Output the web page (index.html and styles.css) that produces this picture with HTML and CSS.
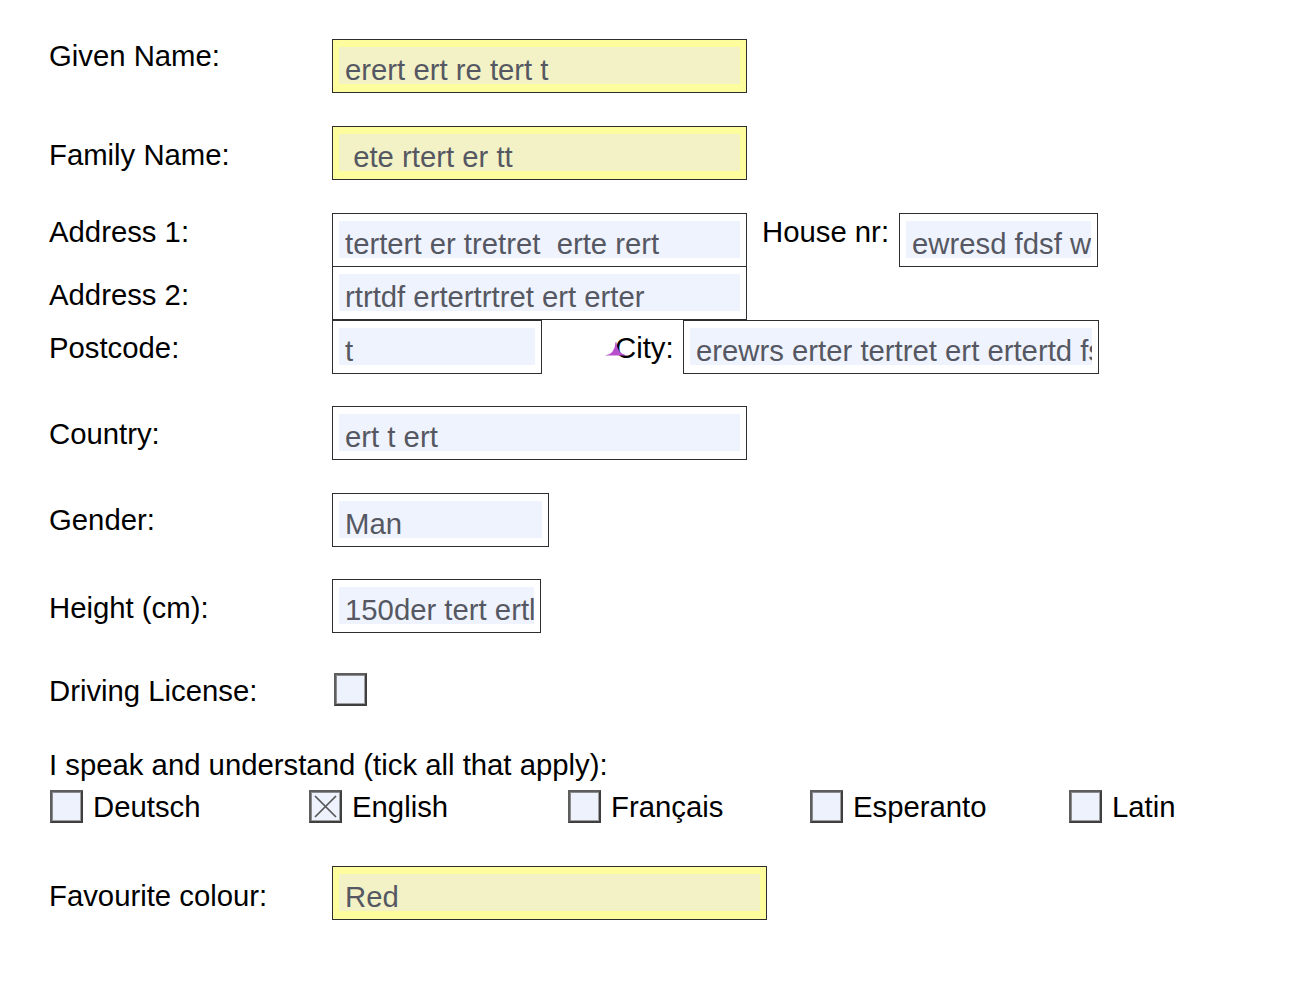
FILE: index.html
```html
<!DOCTYPE html>
<html lang="en">
<head>
<meta charset="utf-8">
<title>Form</title>
<link rel="stylesheet" href="styles.css">
</head>
<body>
<form class="form">
  <div class="row row-given">
    <div class="label label-flush">Given Name:</div>
    <div class="field field-yellow w-wide"><div class="value">erert ert re tert t</div></div>
  </div>

  <div class="row row-gap33">
    <div class="label">Family Name:</div>
    <div class="field field-yellow w-wide"><div class="value">&nbsp;ete rtert er tt</div></div>
  </div>

  <div class="row row-gap33">
    <div class="label label-near">Address 1:</div>
    <div class="field w-wide"><div class="value">tertert er tretret &nbsp;erte rert</div></div>
    <div class="label label-near label-house">House nr:</div>
    <div class="field w-house"><div class="value">ewresd fdsf w</div></div>
  </div>

  <div class="row row-overlap">
    <div class="label">Address 2:</div>
    <div class="field w-wide"><div class="value">rtrtdf ertertrtret ert erter</div></div>
  </div>

  <div class="row">
    <div class="label label-11">Postcode:</div>
    <div class="field w-post"><div class="value">t</div></div>
    <div class="label label-11 label-city">City:<svg class="caret" width="23" height="14" viewBox="0 0 23 14"><path d="M0 13.5 Q9.5 12.5 10.6 0 L11.4 0 Q12.5 12.5 23 13.5 Z" fill="#b84fcc"/></svg></div>
    <div class="field w-city"><div class="value">erewrs erter tertret ert ertertd fs</div></div>
  </div>

  <div class="row row-gap32">
    <div class="label label-11">Country:</div>
    <div class="field w-wide"><div class="value">ert t ert</div></div>
  </div>

  <div class="row row-gap33">
    <div class="label label-10">Gender:</div>
    <div class="field w-gender"><div class="value">Man</div></div>
  </div>

  <div class="row row-gap32">
    <div class="label">Height (cm):</div>
    <div class="field w-height"><div class="value">150der tert ertl</div></div>
  </div>

  <div class="row row-driving">
    <div class="label label-1">Driving License:</div>
    <div class="check check-driving"></div>
  </div>

  <div class="speak">I speak and understand (tick all that apply):</div>

  <div class="langs">
    <div class="lang"><span class="check"></span><span>Deutsch</span></div>
    <div class="lang"><span class="check check-on"><svg width="31" height="31" viewBox="0 0 31 31"><path d="M5 5 L26 26 M26 5 L5 26" stroke="#555555" stroke-width="1.7" fill="none"/></svg></span><span>English</span></div>
    <div class="lang"><span class="check"></span><span>Français</span></div>
    <div class="lang"><span class="check"></span><span>Esperanto</span></div>
    <div class="lang"><span class="check"></span><span>Latin</span></div>
  </div>

  <div class="row row-fav">
    <div class="label label-13">Favourite colour:</div>
    <div class="field field-yellow w-fav"><div class="value">Red</div></div>
  </div>
</form>
</body>
</html>
```

FILE: styles.css
```css
html, body {
  margin: 0;
  padding: 0;
  background: #ffffff;
}

body {
  font-family: "Liberation Sans", Arial, Helvetica, sans-serif;
  font-size: 29.3px;
  line-height: 33px;
  color: #000000;
}

.form {
  padding: 39px 0 0 49px;
}

.row {
  display: flex;
  align-items: flex-start;
}

.row-gap33 { margin-top: 33px; }
.row-gap32 { margin-top: 32px; }
.row-overlap { margin-top: -1px; }
.row-driving { margin-top: 40px; }
.row-fav { margin-top: 43px; }

.label {
  width: 283px;
  flex: none;
  padding-top: 12px;
  white-space: nowrap;
}

.label-flush { padding-top: 0; }
.label-near { padding-top: 2px; }
.label-1 { padding-top: 1px; }
.label-10 { padding-top: 10px; }
.label-11 { padding-top: 11px; }
.label-13 { padding-top: 13px; }

.label-house {
  width: 137px;
  margin-left: 15px;
}

.label-city {
  position: relative;
  width: 68px;
  margin-left: 73px;
}

.caret {
  position: absolute;
  left: -10px;
  top: 22px;
}

.field {
  flex: none;
  box-sizing: border-box;
  height: 54px;
  border: 1px solid #2e2e2e;
  padding: 7px 6px 5px 6px;
  background: #ffffff;
}

.field-yellow {
  background: #fdfd9e;
}

.value {
  box-sizing: border-box;
  height: 40px;
  padding: 6px 0 0 6px;
  background: linear-gradient(#eff3fd, #eff3fd) top left / 100% 37px no-repeat;
  color: #555862;
  white-space: nowrap;
  overflow-x: clip;
  overflow-y: visible;
}

.field-yellow .value {
  background: linear-gradient(#f2f2c6, #f2f2c6) top left / 100% 37px no-repeat;
}

.w-wide { width: 415px; }
.w-house { width: 199px; }
.w-post { width: 210px; }
.w-city { width: 416px; }
.w-gender { width: 217px; }
.w-height { width: 209px; }
.w-fav { width: 435px; }

.check {
  display: block;
  flex: none;
  box-sizing: border-box;
  width: 33px;
  height: 33px;
  border: 2px solid #5e5e5e;
  border-right-color: #3f3f3f;
  border-bottom-color: #3f3f3f;
  box-shadow: inset 1px 1px 0 #8c8c8c, inset -1px -1px 0 #a0a0a0;
  background: #eef2fc;
}

.check svg {
  display: block;
  margin: -1px 0 0 -1px;
}

.check-driving {
  margin-left: 2px;
}

.speak {
  margin-top: 41px;
  white-space: nowrap;
}

.langs {
  margin-top: 9px;
  margin-left: 1px;
  display: grid;
  grid-template-columns: 259px 259px 242px 259px auto;
}

.lang {
  display: flex;
  align-items: flex-start;
  gap: 10px;
  white-space: nowrap;
}
```
